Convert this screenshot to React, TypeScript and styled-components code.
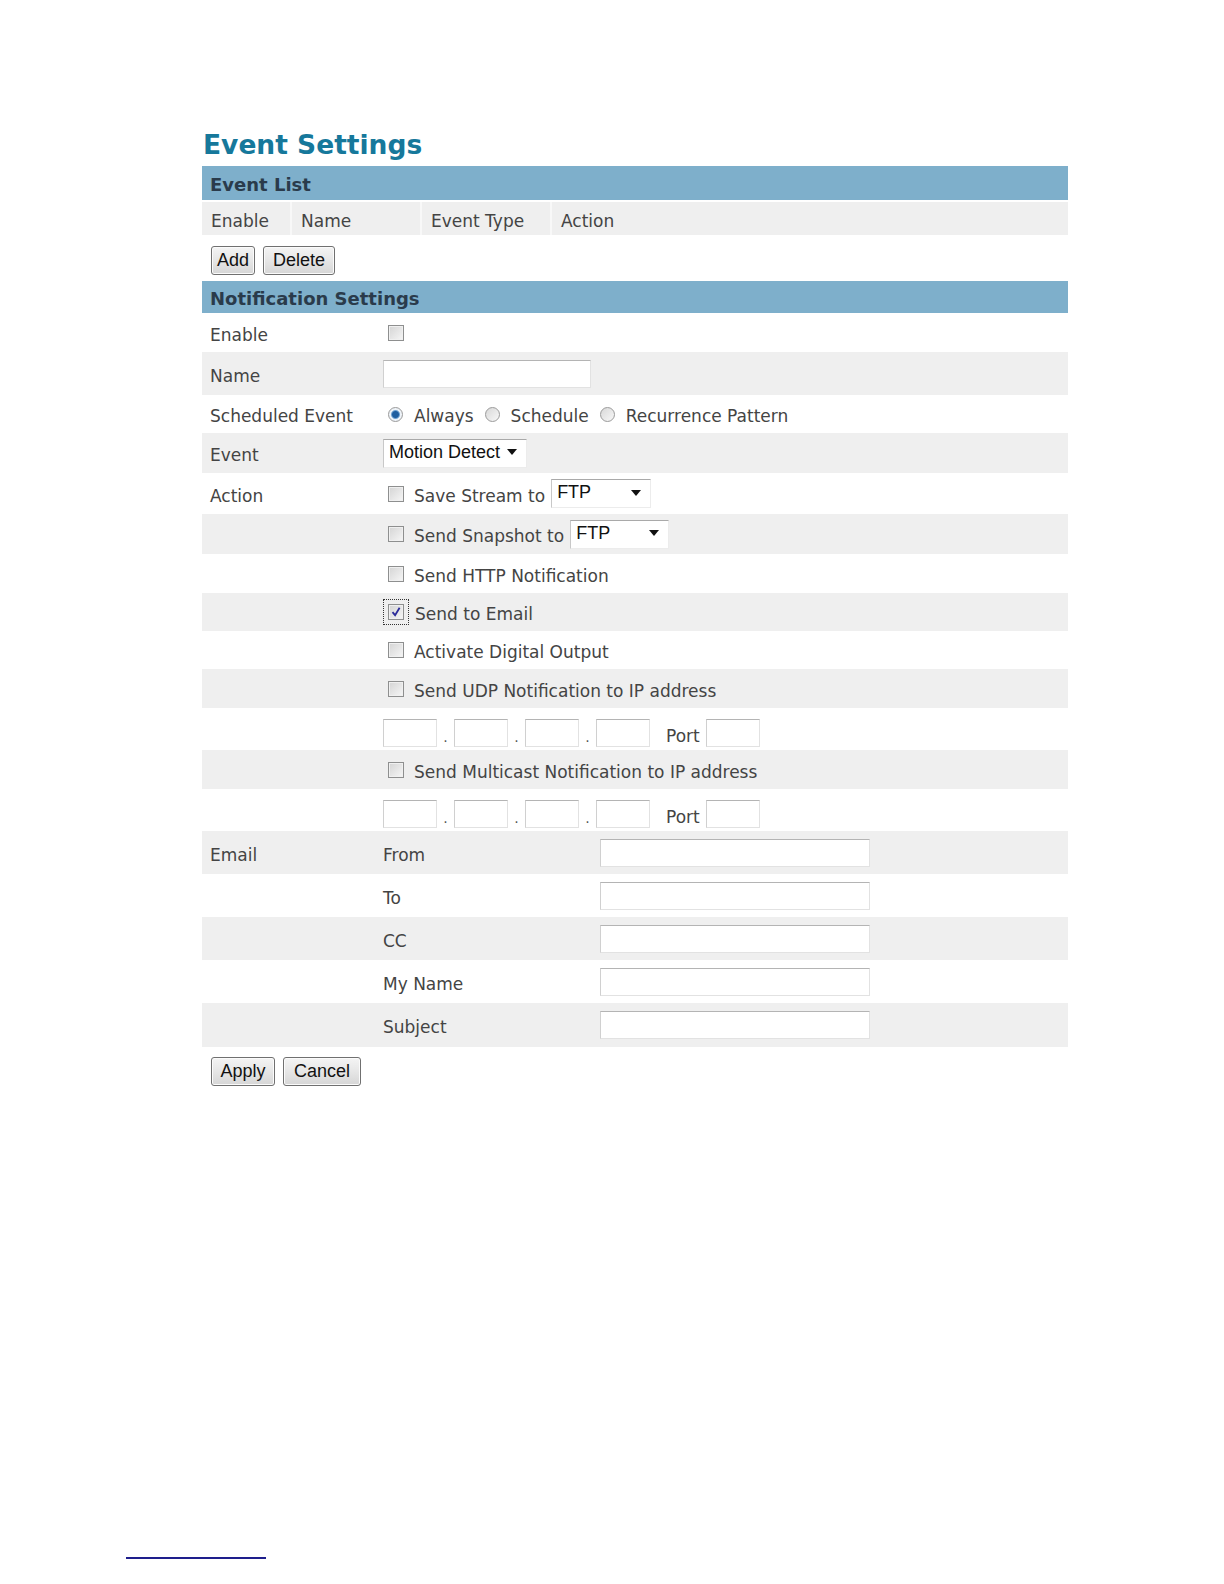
import styled, { createGlobalStyle } from "styled-components";

const GlobalStyle = createGlobalStyle`
  html, body {
    margin: 0;
    padding: 0;
    background: #fff;
  }
  body {
    font-family: "DejaVu Sans", Verdana, sans-serif;
    color: #444;
  }
`;

const Page = styled.div`
  position: relative;
  width: 1224px;
  height: 1584px;
  box-sizing: border-box;
  padding: 126px 0 0 202px;
`;

const Panel = styled.div`
  width: 866px;
  display: flex;
  flex-direction: column;
`;

const Title = styled.h1`
  margin: 0;
  height: 40px;
  padding-left: 1px;
  font-family: "DejaVu Sans", Verdana, sans-serif;
  font-weight: bold;
  font-size: 26.5px;
  line-height: 38px;
  color: #16789b;
`;

const SectionHeader = styled.div<{ $h: number }>`
  height: ${(p) => p.$h}px;
  background: #7eafcb;
  display: flex;
  align-items: center;
  padding-left: 8px;
  padding-top: 2px;
  box-sizing: border-box;
  font-weight: bold;
  font-size: 18px;
  color: #2a3b4b;
`;

const HeadRow = styled.div`
  margin-top: 2px;
  height: 33px;
  display: flex;
  background: #efefef;
`;

const HeadCell = styled.div<{ $w?: number }>`
  ${(p) => (p.$w ? `width: ${p.$w}px;` : "flex: 1;")}
  box-sizing: border-box;
  display: flex;
  align-items: center;
  padding: 4px 0 0 9px;
  font-size: 17px;
  color: #444;
  & + & {
    border-left: 2px solid #f8f8f8;
  }
`;

const ButtonBar = styled.div<{ $h: number; $top: number }>`
  height: ${(p) => p.$h}px;
  box-sizing: border-box;
  padding: ${(p) => p.$top}px 0 0 9px;
  display: flex;
  gap: 8px;
  align-items: flex-start;
`;

const Button = styled.button<{ $w: number }>`
  width: ${(p) => p.$w}px;
  height: 29px;
  padding: 0;
  border: 1px solid #707070;
  border-radius: 3px;
  background: linear-gradient(#f4f4f4, #e6e6e6 50%, #d6d6d6);
  box-shadow: inset 0 0 0 1px #fbfbfb;
  font-family: "Liberation Sans", Arial, sans-serif;
  font-size: 18px;
  color: #111;
`;

const Row = styled.div<{ $h: number; $alt?: boolean }>`
  height: ${(p) => p.$h}px;
  display: flex;
  align-items: center;
  background: ${(p) => (p.$alt ? "#efefef" : "#fff")};
`;

const Label = styled.div`
  width: 181px;
  box-sizing: border-box;
  padding-left: 8px;
  padding-top: 4px;
  font-size: 17px;
  color: #444;
`;

const Value = styled.div<{ $pad?: number }>`
  flex: 1;
  display: flex;
  align-items: center;
  padding-left: ${(p) => p.$pad ?? 0}px;
  font-size: 17px;
  color: #444;
`;

const SubLabel = styled.div`
  width: 217px;
  padding-top: 4px;
`;

const Text = styled.span<{ $ml?: number }>`
  margin-left: ${(p) => p.$ml ?? 0}px;
  padding-top: 4px;
  white-space: nowrap;
`;

const TextInput = styled.div<{ $w: number }>`
  width: ${(p) => p.$w}px;
  height: 28px;
  box-sizing: border-box;
  background: #fff;
  border: 1px solid #e2e2e2;
  border-top-color: #b4b4b4;
  border-left-color: #d0d0d0;
`;

const Box = styled.span`
  width: 16px;
  height: 16px;
  box-sizing: border-box;
  border: 1px solid #8e8f8f;
  background: linear-gradient(135deg, #d4d4d4, #f6f6f6);
  box-shadow: inset 0 0 0 1px #f0f0f0;
  display: inline-flex;
  align-items: center;
  justify-content: center;
`;

const Focus = styled.span`
  display: inline-flex;
  padding: 5px;
  outline: 1px dotted #333;
  outline-offset: -1px;
`;

const RadioDot = styled.span<{ $on?: boolean }>`
  width: 15px;
  height: 15px;
  box-sizing: border-box;
  border-radius: 50%;
  border: 1px solid #9a9a9a;
  background: ${(p) =>
    p.$on
      ? "radial-gradient(circle, #1f5fa0 0 3px, #6ea2d2 4px, #eef3f8 5px)"
      : "linear-gradient(135deg, #d8d8d8, #f8f8f8)"};
  display: inline-block;
`;

const Select = styled.div<{ $w: number; $ml?: number }>`
  width: ${(p) => p.$w}px;
  height: 29px;
  margin-left: ${(p) => p.$ml ?? 0}px;
  box-sizing: border-box;
  border: 1px solid #ececec;
  border-top-color: #a9a9a9;
  border-left-color: #c8c8c8;
  background: #fff;
  display: flex;
  align-items: center;
  justify-content: space-between;
  padding: 0 9px 2px 5px;
  font-family: "Liberation Sans", Arial, sans-serif;
  font-size: 18px;
  color: #111;
`;

const IpGroup = styled.div`
  display: flex;
  align-items: center;
  padding-top: 8px;
`;

const Dot = styled.span`
  width: 17px;
  text-align: center;
  padding-top: 8px;
  font-size: 14px;
  color: #555;
`;

const PortLabel = styled.span`
  margin: 0 6px 0 16px;
  padding-top: 6px;
`;

const Footnote = styled.div`
  position: absolute;
  left: 126px;
  top: 1557px;
  width: 140px;
  height: 2px;
  background: #1e1e8c;
`;

const Arrow = () => (
  <svg width="10" height="6" viewBox="0 0 10 6">
    <path d="M0 0h10L5 6z" fill="#111" />
  </svg>
);

const Check = ({ checked }: { checked?: boolean }) => (
  <Box>
    {checked && (
      <svg width="12" height="12" viewBox="0 0 12 12">
        <path
          d="M2.5 6.2l2.6 3L9.6 1.8"
          fill="none"
          stroke="#2b2b9a"
          strokeWidth="1.8"
        />
      </svg>
    )}
  </Box>
);

const IpRow = ({ alt }: { alt?: boolean }) => (
  <Row $h={alt ? 43 : 42} $alt={alt}>
    <Label />
    <Value>
      <IpGroup>
        <TextInput $w={54} />
        <Dot>.</Dot>
        <TextInput $w={54} />
        <Dot>.</Dot>
        <TextInput $w={54} />
        <Dot>.</Dot>
        <TextInput $w={54} />
        <PortLabel>Port</PortLabel>
        <TextInput $w={54} />
      </IpGroup>
    </Value>
  </Row>
);

const ActionRow = ({
  h,
  alt,
  label,
  text,
  children,
}: {
  h: number;
  alt?: boolean;
  label?: string;
  text: string;
  children?: React.ReactNode;
}) => (
  <Row $h={h} $alt={alt}>
    <Label>{label}</Label>
    <Value $pad={5}>
      <Check />
      <Text $ml={10}>{text}</Text>
      {children}
    </Value>
  </Row>
);

const emailFields = ["From", "To", "CC", "My Name", "Subject"];

export default function App() {
  return (
    <Page>
      <GlobalStyle />
      <Panel>
        <Title>Event Settings</Title>
        <SectionHeader $h={34}>Event List</SectionHeader>
        <HeadRow>
          <HeadCell $w={88}>Enable</HeadCell>
          <HeadCell $w={130}>Name</HeadCell>
          <HeadCell $w={130}>Event Type</HeadCell>
          <HeadCell>Action</HeadCell>
        </HeadRow>
        <ButtonBar $h={46} $top={11}>
          <Button $w={44}>Add</Button>
          <Button $w={72}>Delete</Button>
        </ButtonBar>
        <SectionHeader $h={32}>Notification Settings</SectionHeader>

        <Row $h={39}>
          <Label>Enable</Label>
          <Value $pad={5}>
            <Check />
          </Value>
        </Row>
        <Row $h={43} $alt>
          <Label>Name</Label>
          <Value>
            <TextInput $w={208} />
          </Value>
        </Row>
        <Row $h={38}>
          <Label>Scheduled Event</Label>
          <Value $pad={5}>
            <RadioDot $on />
            <Text $ml={11}>Always</Text>
            <Text $ml={11} as="span" />
            <RadioDot />
            <Text $ml={11}>Schedule</Text>
            <Text $ml={11} as="span" />
            <RadioDot />
            <Text $ml={11}>Recurrence Pattern</Text>
          </Value>
        </Row>
        <Row $h={40} $alt>
          <Label>Event</Label>
          <Value>
            <Select $w={144}>
              Motion Detect
              <Arrow />
            </Select>
          </Value>
        </Row>
        <ActionRow h={41} label="Action" text="Save Stream to">
          <Select $w={100} $ml={6}>
            FTP
            <Arrow />
          </Select>
        </ActionRow>
        <ActionRow h={40} alt text="Send Snapshot to">
          <Select $w={99} $ml={6}>
            FTP
            <Arrow />
          </Select>
        </ActionRow>
        <ActionRow h={39} text="Send HTTP Notification" />
        <Row $h={38} $alt>
          <Label />
          <Value>
            <Focus>
              <Check checked />
            </Focus>
            <Text $ml={6}>Send to Email</Text>
          </Value>
        </Row>
        <ActionRow h={38} text="Activate Digital Output" />
        <ActionRow h={39} alt text="Send UDP Notification to IP address" />
        <IpRow />
        <ActionRow h={39} alt text="Send Multicast Notification to IP address" />
        <IpRow />

        {emailFields.map((f, i) => (
          <Row key={f} $h={i === 4 ? 44 : 43} $alt={i % 2 === 0}>
            <Label>{i === 0 ? "Email" : ""}</Label>
            <Value>
              <SubLabel>{f}</SubLabel>
              <TextInput $w={270} />
            </Value>
          </Row>
        ))}

        <ButtonBar $h={50} $top={10}>
          <Button $w={64}>Apply</Button>
          <Button $w={78}>Cancel</Button>
        </ButtonBar>
      </Panel>
      <Footnote />
    </Page>
  );
}
